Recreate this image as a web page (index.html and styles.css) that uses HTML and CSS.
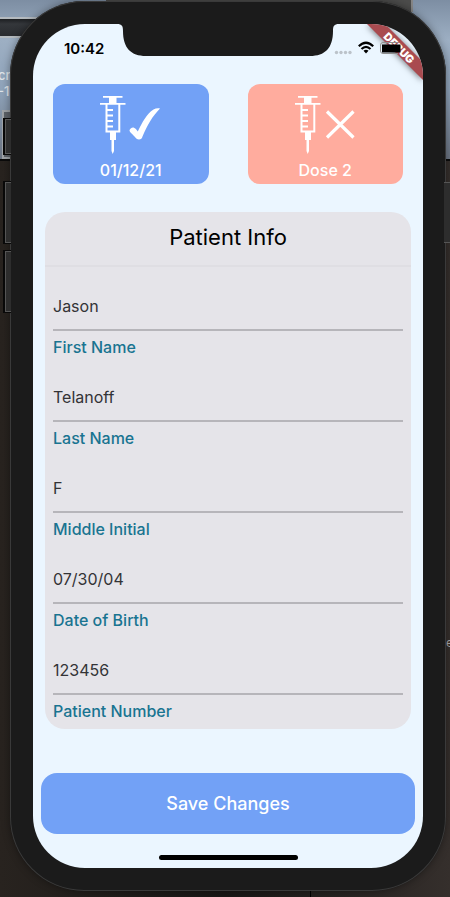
FILE: index.html
```html
<!DOCTYPE html>
<html lang="en">
<head>
<meta charset="utf-8">
<meta name="viewport" content="width=device-width, initial-scale=1">
<title>Patient Info</title>
<link rel="stylesheet" href="styles.css">
</head>
<body>
<div class="desktop" aria-hidden="true">
  <div class="sky"></div>
  <div class="window-bar"></div>
  <div class="caption"><span>cr</span><span>-1</span></div>
  <div class="tile"></div>
  <div class="top-edge"></div>
  <div class="seam"></div>
  <div class="side-letter">e</div>
</div>
<div class="phone">
  <i class="key key-mute"></i><i class="key key-up"></i><i class="key key-down"></i><i class="key key-power"></i>
  <main class="screen">
    <svg class="notch" width="222" height="32" viewBox="0 0 222 32" aria-hidden="true"><path fill="#1b1b1b" d="M0 0C5 0 6 2 6 7C6 24 14 32 29 32H193C208 32 216 24 216 7C216 2 217 0 222 0Z"/></svg>
    <svg class="ribbon" width="64" height="64" viewBox="0 0 64 64" role="img" aria-label="Debug">
      <path class="ribbon-band" d="M8 0H26L64 38V56Z"/>
      <text class="ribbon-text" x="0" y="4" transform="translate(40 24) rotate(45)">DEBUG</text>
    </svg>
    <header class="status">
      <time>10:42</time>
      <div class="status-icons">
        <svg width="18" height="16" viewBox="0 0 18 16" aria-hidden="true"><g fill="#bcc3ca"><circle cx="2.500" cy="12.500" r="1.700"/><circle cx="7" cy="12.500" r="1.700"/><circle cx="11.500" cy="12.500" r="1.700"/><circle cx="16" cy="12.500" r="1.700"/></g></svg>
        <svg width="16" height="16" viewBox="0 0 16 16" aria-hidden="true"><g fill="none" stroke="#000" stroke-width="2.200"><path d="M.8 6.300Q8-.8 15.200 6.300"/><path d="M3.500 9Q8 4.700 12.500 9"/></g><path d="M5.500 10.800Q8 8.700 10.500 10.800L8 13.400Z"/></svg>
        <svg width="23" height="16" viewBox="0 0 23 16" aria-hidden="true"><path d="M18 2.500H3Q.5 2.500 .5 5V11Q.5 13.500 3 13.500H18" fill="none" stroke="#8e8e8e"/><rect x="2" y="4.500" width="18.500" height="8"/></svg>
      </div>
    </header>
    <section class="doses" aria-label="Doses">
      <button class="dose dose-done" type="button">
        <span class="dose-icons">
          <svg width="26" height="58" viewBox="0 0 26 58" aria-hidden="true"><use href="#syringe"/></svg>
          <svg width="32" height="58" viewBox="0 0 32 58" aria-hidden="true"><path fill="#fff" d="M31 12.500C23.500 20 18.500 29 13.500 40.500C13 42.500 12 43.500 10 43.500C8 43.500 7 42.500 6 41C3.500 38 .5 36 .5 34.500C.5 33 3 31.200 4.500 31.600C6.500 32.200 7.500 34 8.800 35.500C13.500 26 17.500 18 24.500 13.500C26.500 12.300 29 12 31 12.500Z"/></svg>
        </span>
        <span>01/12/21</span>
      </button>
      <button class="dose dose-pending" type="button">
        <span class="dose-icons">
          <svg width="26" height="58" viewBox="0 0 26 58" aria-hidden="true"><use href="#syringe"/></svg>
          <svg width="32" height="58" viewBox="0 0 32 58" aria-hidden="true"><path d="M3 15.500L29.500 41.500M29.500 15.500L3 41.500" stroke="#fff" stroke-width="3.200"/></svg>
        </span>
        <span>Dose 2</span>
      </button>
    </section>
    <form class="panel" id="patient">
      <h1>Patient Info</h1>
      <div class="field"><input id="first" value="Jason"><label for="first">First Name</label></div>
      <div class="field"><input id="last" value="Telanoff"><label for="last">Last Name</label></div>
      <div class="field"><input id="middle" value="F"><label for="middle">Middle Initial</label></div>
      <div class="field"><input id="birth" value="07/30/04"><label for="birth">Date of Birth</label></div>
      <div class="field"><input id="number" value="123456"><label for="number">Patient Number</label></div>
    </form>
    <button class="save" type="submit" form="patient">Save Changes</button>
    <div class="home-bar"></div>
  </main>
</div>
<svg class="defs" width="0" height="0" aria-hidden="true"><defs><g id="syringe"><path fill="#fff" d="M3 0H22.500V1.800H16.500V7H25.500V8.800H0V7H9V1.800H3Z"/><path fill="#fff" d="M10 36H16V44H14V55L12.700 58L11.500 55V44H10Z"/><path fill="none" stroke="#fff" stroke-width="2" d="M6.500 8V35.500H19.300V8"/><path stroke="#fff" stroke-width="2" d="M6 14H13M6 19.500H13M6 25H13M6 30.500H13"/></g></defs></svg>
</body>
</html>
```
FILE: styles.css
```css
* { box-sizing: border-box; }

body {
  margin: 0;
  position: relative;
  min-height: 100vh;
  padding: 1px 4px 5px 10px;
  overflow: hidden;
  background: linear-gradient(90deg, #28231f, #191716 50%, #352f2c);
  font-family: Inter, "Liberation Sans", sans-serif;
}

button, input { font: inherit; }
.defs { position: absolute; }

/* Blurred desktop behind the device */
.desktop { position: absolute; inset: 0; }
.desktop > div { position: absolute; }
.sky {
  inset: 0 0 auto;
  height: 161px;
  background: linear-gradient(180deg, #7d8ea3, #9dafc3 40px, #8fa3ba 90px, #6b7482);
  border-bottom: 2px solid #0b0b0b;
}
.top-edge {
  top: 0;
  left: 106px;
  right: 37px;
  height: 12px;
  background: #4c4c4b;
  border-right: 2px solid #858585;
}
.window-bar {
  top: 17px;
  left: 0;
  width: 40px;
  height: 21px;
  background: linear-gradient(#1d1f22, #34373b 5px, #292b2f);
  border: solid #b4babf;
  border-width: 2px 0;
}
.caption {
  top: 67px;
  left: -2px;
  display: grid;
  color: #dfe4e9;
  font-size: 13px;
  font-weight: 500;
  line-height: 16px;
}
.tile {
  top: 110px;
  left: 2px;
  width: 16px;
  height: 49px;
  background: #5d6268;
  border: 2px solid #a0a4a8;
}
.seam {
  left: 310px;
  bottom: 0;
  width: 1px;
  height: 12px;
  background: #000;
}
.side-letter {
  top: 636px;
  right: -3px;
  color: #aaa;
  font-size: 12px;
  line-height: 14px;
}

.phone {
  position: relative;
  padding: 23px;
  border-radius: 74px;
  background: #1b1b1b;
  box-shadow: inset 0 0 0 1px #3a3a3a, 0 0 8px #0006;
}
.key {
  position: absolute;
  left: -5px;
  width: 6px;
  height: 61px;
  background: #2d2d2d;
  border: solid #555;
  border-width: 1px 0 1px 1px;
  box-shadow: -1px 0 0 1px #080808;
}
.key-mute { top: 118px; height: 35px; }
.key-up { top: 181px; }
.key-down { top: 250px; }
.key-power {
  top: 181px;
  left: auto;
  right: -4px;
  border-width: 1px 0;
  box-shadow: none;
}

.screen {
  position: relative;
  display: flex;
  flex-direction: column;
  overflow: hidden;
  padding: 0 8px 8px;
  border-radius: 52px;
  background: #ebf6ff;
}
.notch { position: absolute; top: 0; left: 50%; margin-left: -111px; }
.ribbon { position: absolute; top: 0; right: 0; overflow: visible; }
.ribbon-band { fill: #a94b50; filter: drop-shadow(0 1px 3px #0008); }
.ribbon-text { fill: #fff; font-size: 11px; font-weight: 900; text-anchor: middle; }

.status {
  position: relative;
  display: flex;
  justify-content: space-between;
  align-items: center;
  height: 48px;
  padding: 0 12px 0 23px;
  font-size: 15px;
  font-weight: 600;
}
.status-icons { display: flex; gap: 6px; }

.doses {
  display: grid;
  grid-template-columns: 1fr 1fr;
  gap: 39px;
  margin: 12px 12px 28px;
}
.dose {
  display: flex;
  flex-direction: column;
  align-items: center;
  gap: 6px;
  height: 100px;
  padding: 12px 0 0;
  border: 0;
  border-radius: 12px;
  color: #fff;
  font-size: 16px;
  font-weight: 500;
  line-height: 20px;
}
.dose-done, .save { background: #72a1f6; }
.dose-pending { background: #ffac9e; }
.dose-icons { display: flex; gap: 3px; }

.panel {
  margin: 0 4px;
  padding-bottom: 7px;
  border-radius: 20px;
  background: #e5e4e9;
}
.panel h1 {
  margin: 0;
  padding: 11px 0 14px;
  border-bottom: 2px solid #dfdee3;
  font-size: 22px;
  font-weight: 400;
  line-height: 28px;
  text-align: center;
}
.field {
  display: flex;
  flex-direction: column;
  gap: 6px;
  height: 91px;
  padding: 21px 8px 0;
}
.field input {
  width: 100%;
  height: 43px;
  padding: 0 0 5px;
  border: 0;
  border-bottom: 2px solid #b6b5ba;
  border-radius: 0;
  outline: 0;
  background: none;
  color: #333336;
  font-size: 16px;
}
.field label {
  color: #197491;
  font-size: 16px;
  font-weight: 500;
  line-height: 20px;
}

.save {
  height: 61px;
  margin-top: 44px;
  border: 0;
  border-radius: 16px;
  color: #fff;
  font-size: 18px;
  font-weight: 500;
}
.home-bar {
  align-self: center;
  width: 139px;
  height: 5px;
  margin-top: 21px;
  border-radius: 3px;
  background: #000;
}
```
